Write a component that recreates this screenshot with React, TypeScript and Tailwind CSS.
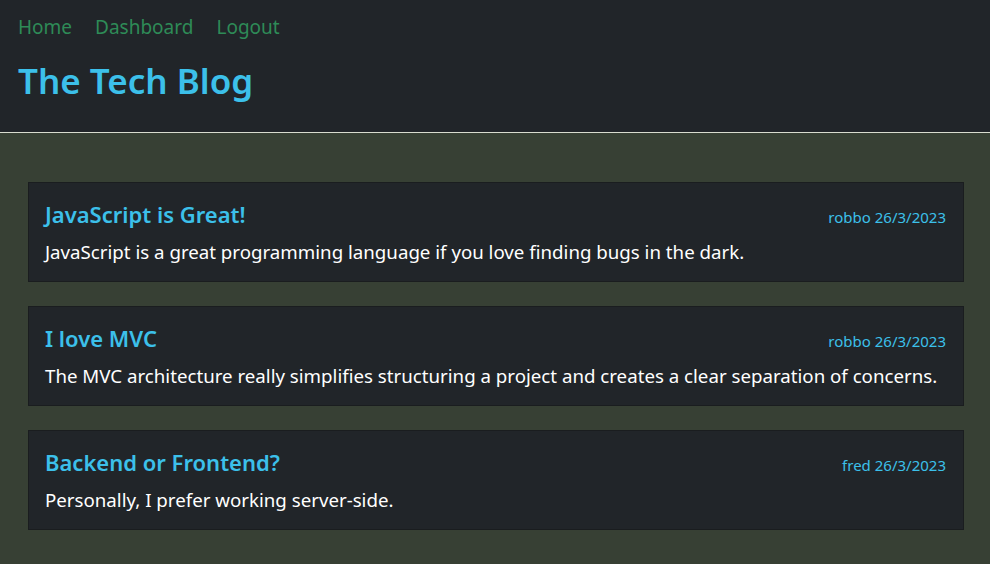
import React from "react";

const posts = [
  { title: "JavaScript is Great!", author: "robbo", date: "26/3/2023", body: "JavaScript is a great programming language if you love finding bugs in the dark." },
  { title: "I love MVC", author: "robbo", date: "26/3/2023", body: "The MVC architecture really simplifies structuring a project and creates a clear separation of concerns." },
  { title: "Backend or Frontend?", author: "fred", date: "26/3/2023", body: "Personally, I prefer working server-side." },
];

export default function App() {
  return (
    <div className="min-h-[564px] bg-[#374034] font-['Noto_Sans',sans-serif]">
      <header className="h-[133px] bg-[#212529] border-b border-[#d9dccf] px-[18px] pt-[13px]">
        <nav className="flex gap-[23px] text-[19px] leading-[28px] text-[#2e8b57]">
          <a>Home</a>
          <a>Dashboard</a>
          <a>Logout</a>
        </nav>
        <h1 className="mt-[18px] text-[35px] leading-[44px] font-semibold text-[#3cc0ea]">The Tech Blog</h1>
      </header>
      <main className="pl-[28px] pr-[26px] pt-[49px] pb-[30px] flex flex-col gap-[24px]">
        {posts.map((p) => (
          <div key={p.title} className="h-[100px] bg-[#212529] border border-[#1a1d1f] pl-[16px] pr-[17px] pt-[16px]">
            <div className="flex items-baseline justify-between">
              <h2 className="text-[22px] leading-[30px] font-semibold text-[#3cc0ea]">{p.title}</h2>
              <span className="text-[15px] text-[#3cc0ea]">{p.author} {p.date}</span>
            </div>
            <p className="mt-[9px] text-[18.7px] leading-[28px] text-white whitespace-nowrap">{p.body}</p>
          </div>
        ))}
      </main>
    </div>
  );
}
